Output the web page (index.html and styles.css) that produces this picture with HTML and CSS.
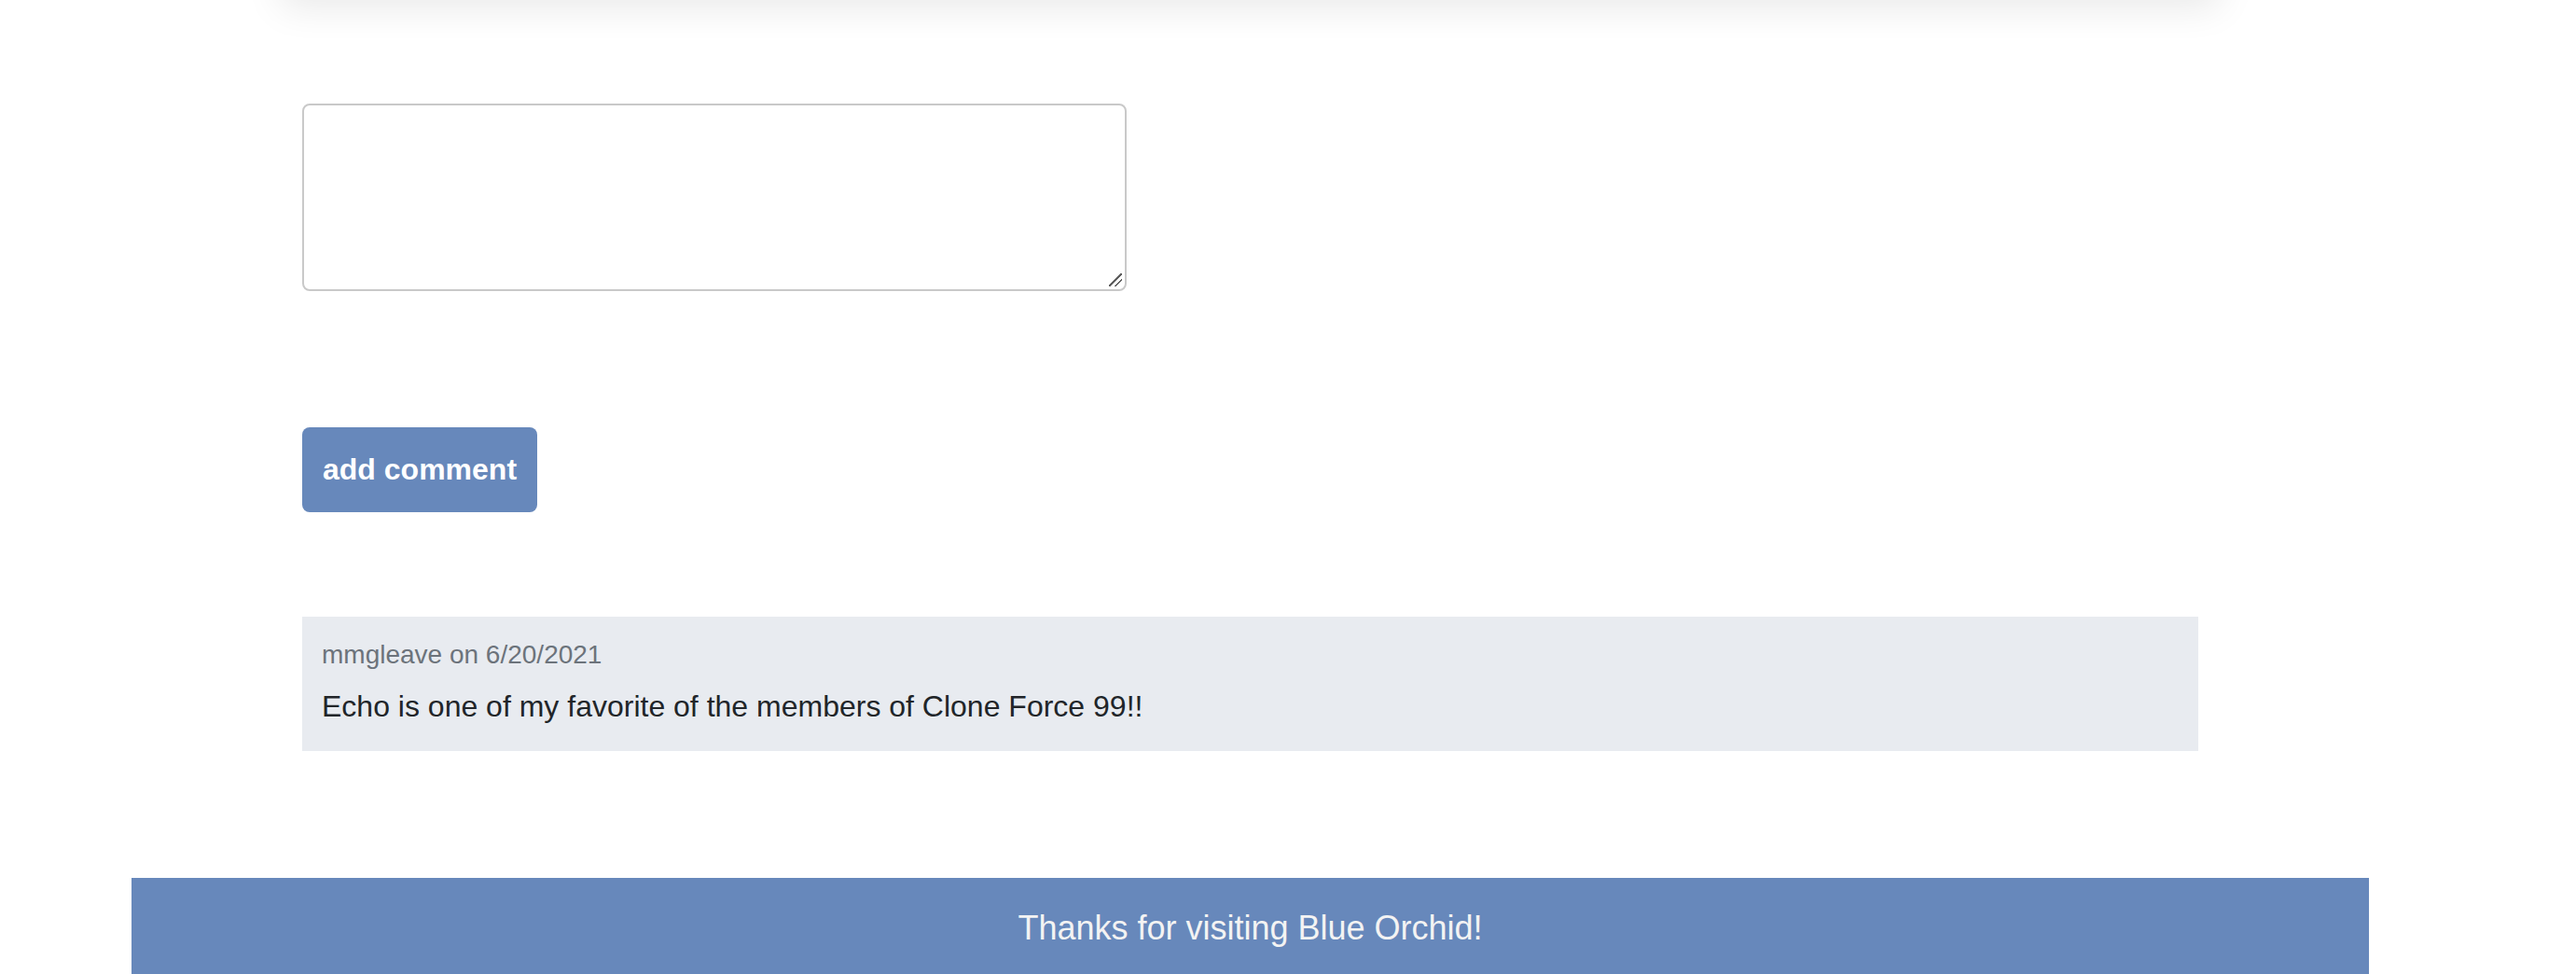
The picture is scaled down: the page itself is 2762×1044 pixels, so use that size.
FILE: index.html
```html
<!DOCTYPE html>
<html lang="en">
<head>
<meta charset="utf-8">
<title>Blue Orchid</title>
<link rel="stylesheet" href="styles.css">
</head>
<body>
<div class="page">
  <div class="top-card"></div>
  <main class="main">
    <form class="comment-form">
      <textarea class="comment-input"></textarea>
      <button type="button" class="btn-add">add comment</button>
    </form>
    <section class="comments">
      <article class="comment">
        <div class="comment-meta">mmgleave on 6/20/2021</div>
        <div class="comment-text">Echo is one of my favorite of the members of Clone Force 99!!</div>
      </article>
    </section>
  </main>
  <footer class="footer">Thanks for visiting Blue Orchid!</footer>
</div>
</body>
</html>
```
FILE: styles.css
```css
html, body {
  margin: 0;
  padding: 0;
  background: #ffffff;
  overflow: hidden;
}
body {
  font-family: "Liberation Sans", Arial, Helvetica, sans-serif;
  color: #212529;
}
.page {
  margin-left: 141px;
  width: 2399px;
}
.top-card {
  height: 120px;
  margin: -120px 160px 0 160px;
  background: #ffffff;
  box-shadow: 0 8px 40px rgba(0, 0, 0, 0.09);
}
.main {
  padding: 0 183px;
}
.comment-form {
  margin: 0;
}
.comment-input {
  display: block;
  box-sizing: border-box;
  width: 884px;
  height: 201px;
  margin: 111px 0 0 0;
  border: 2px solid #c9c9c9;
  border-radius: 8px;
  resize: none;
  background: #ffffff linear-gradient(135deg, transparent 0 46%, #5f5f5f 46% 54%, transparent 54% 70%, #5f5f5f 70% 78%, transparent 78%) no-repeat right 3px bottom 3px / 14px 14px;
  font-family: inherit;
  font-size: 28px;
  padding: 8px;
}
.btn-add {
  display: block;
  margin-top: 146px;
  height: 91px;
  padding: 0 22px;
  border: none;
  border-radius: 8px;
  background: #6788bb;
  color: #ffffff;
  font-family: "Liberation Sans", Arial, Helvetica, sans-serif;
  font-weight: bold;
  font-size: 32px;
  line-height: 37px;
}
.comments {
  margin-top: 112px;
}
.comment {
  background: #e8ebf0;
  padding: 20px 21px 24px 21px;
  display: flex;
  flex-direction: column;
  gap: 10px;
}
.comment-meta {
  font-size: 28px;
  line-height: 42px;
  color: #6c737b;
}
.comment-text {
  font-size: 32px;
  line-height: 48px;
  color: #212529;
}
.footer {
  margin-top: 136px;
  background: #6788bb;
  color: #f3f3f3;
  text-align: center;
  font-size: 36px;
  line-height: 41px;
  padding: 33px 0 40px 0;
}
```
